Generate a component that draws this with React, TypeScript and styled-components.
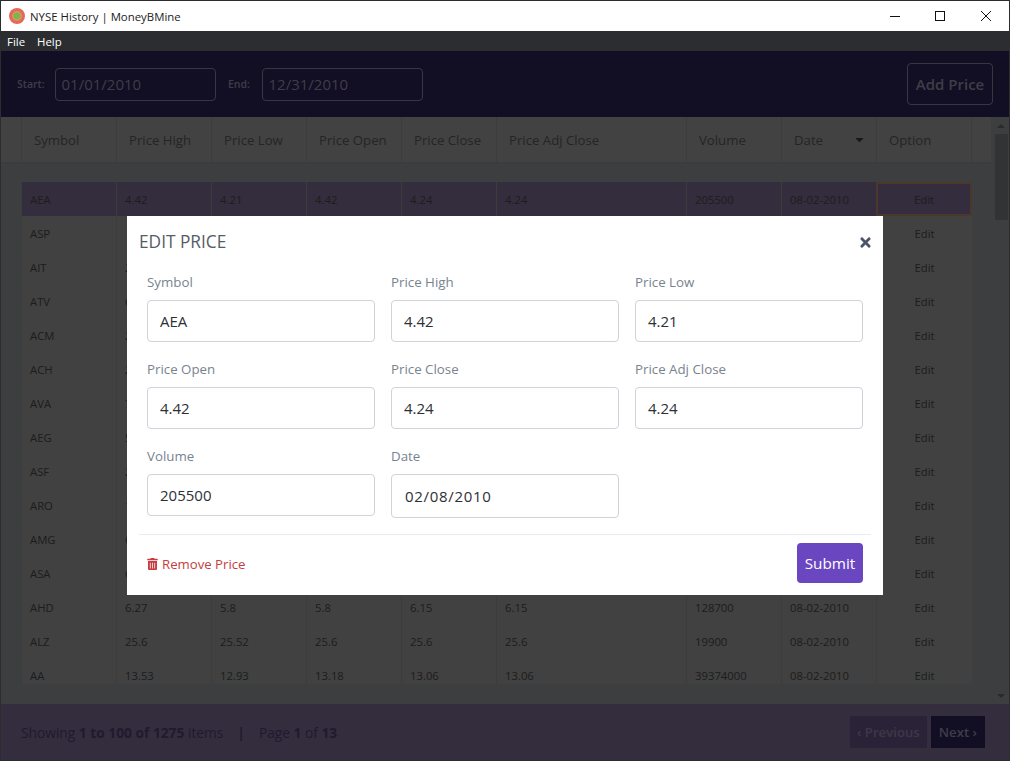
import styled, { createGlobalStyle } from "styled-components";
import { FaTimes, FaTrashAlt, FaCaretDown } from "react-icons/fa";

interface Price {
  symbol: string;
  high: string;
  low?: string;
  open?: string;
  close?: string;
  adj?: string;
  volume?: string;
  date?: string;
}

// rows behind the modal only show their symbol, a sliver of the high price and the edit link
const prices: Price[] = [
  { symbol: "AEA", high: "4.42", low: "4.21", open: "4.42", close: "4.24", adj: "4.24", volume: "205500", date: "08-02-2010" },
  { symbol: "ASP", high: "" },
  { symbol: "AIT", high: "2" },
  { symbol: "ATV", high: "6" },
  { symbol: "ACM", high: "2" },
  { symbol: "ACH", high: "2" },
  { symbol: "AVA", high: "7" },
  { symbol: "AEG", high: "5" },
  { symbol: "ASF", high: "2" },
  { symbol: "ARO", high: "1" },
  { symbol: "AMG", high: "6" },
  { symbol: "ASA", high: "6" },
  { symbol: "AHD", high: "6.27", low: "5.8", open: "5.8", close: "6.15", adj: "6.15", volume: "128700", date: "08-02-2010" },
  { symbol: "ALZ", high: "25.6", low: "25.52", open: "25.6", close: "25.6", adj: "25.6", volume: "19900", date: "08-02-2010" },
  { symbol: "AA", high: "13.53", low: "12.93", open: "13.18", close: "13.06", adj: "13.06", volume: "39374000", date: "08-02-2010" },
];

const columns = "95px 95px 95px 95px 95px 190px 95px 95px 96px";

const GlobalStyle = createGlobalStyle`
  html, body {
    margin: 0;
    padding: 0;
    height: 100%;
    overflow: hidden;
    font-family: "Open Sans", "Liberation Sans", sans-serif;
  }
  * {
    box-sizing: border-box;
  }
`;

const Window = styled.div`
  display: flex;
  flex-direction: column;
  width: 1010px;
  height: 761px;
  border: 1px solid #2b2d30;
  background: #fff;
`;

const TitleBar = styled.div`
  display: flex;
  align-items: center;
  flex: none;
  height: 30px;
  padding-left: 8px;
  background: #fff;
`;

const TitleText = styled.span`
  margin-left: 5px;
  font-size: 11.4px;
  color: #1c1c1c;
`;

const WindowControls = styled.div`
  display: flex;
  margin-left: auto;
  margin-right: 0.5px;
`;

const WindowControl = styled.div`
  display: flex;
  align-items: center;
  justify-content: center;
  width: 45.5px;
  height: 30px;
`;

const MenuBar = styled.div`
  display: flex;
  align-items: center;
  flex: none;
  gap: 12px;
  height: 20px;
  padding-left: 6px;
  background: #2b2d30;
  font-size: 11.4px;
  color: #fff;
`;

const Workspace = styled.div`
  position: relative;
  display: flex;
  flex-direction: column;
  flex: 1;
  min-height: 0;
  background: #7a7d80;
`;

const Toolbar = styled.div`
  display: flex;
  align-items: center;
  flex: none;
  height: 66px;
  padding: 0 16px;
  background: #241c48;
`;

const FilterLabel = styled.label<{ $width: number }>`
  width: ${(p) => p.$width}px;
  font-size: 10.5px;
  font-weight: 600;
  color: #7d7a8e;
`;

const DateFilter = styled.div`
  width: 161px;
  height: 33px;
  margin-right: 12px;
  padding: 0 5.5px;
  border: 1px solid #716e82;
  border-radius: 4px;
  font-size: 15px;
  line-height: 31px;
  color: #7d7a8e;
`;

const AddButton = styled.button`
  margin-left: auto;
  width: 86px;
  height: 42px;
  padding: 0;
  border: 1px solid #716e82;
  border-radius: 4px;
  background: transparent;
  font-family: inherit;
  font-size: 15px;
  font-weight: 600;
  color: #7d7a8e;
`;

const TableArea = styled.div`
  display: flex;
  flex: 1;
  min-height: 0;
`;

const TableScroller = styled.div`
  display: flex;
  flex-direction: column;
  flex: 1;
  min-width: 0;
`;

const HeaderRow = styled.div`
  display: grid;
  grid-template-columns: ${columns};
  flex: none;
  height: 47px;
  padding-left: 20px;
  background: #848484;
  border-bottom: 2px solid #787878;
`;

const HeaderCell = styled.div`
  display: flex;
  align-items: center;
  justify-content: space-between;
  padding: 0 13px 0 12px;
  border-left: 1px solid #787878;
  font-size: 13.2px;
  color: #4a4a4a;

  &:last-child {
    border-right: 1px solid #787878;
  }
`;

const SortCaret = styled(FaCaretDown)`
  width: 13px;
  height: 13px;
  margin-right: -3px;
  color: #333;
`;

const Rows = styled.div`
  flex: 1;
  min-height: 0;
  margin-top: 18px;
  margin-bottom: 20px;
  padding-left: 20px;
  overflow: hidden;
`;

const Row = styled.div<{ $selected?: boolean }>`
  display: grid;
  grid-template-columns: ${columns};
  width: 951px;
  height: 34px;
  background: ${(p) => (p.$selected ? "#675a7c" : "#828282")};
`;

const Cell = styled.div`
  display: flex;
  align-items: center;
  padding-left: 8px;
  border-left: 1px solid #787878;
  font-size: 11.3px;
  color: #3a3a3a;
`;

const EditCell = styled(Cell)<{ $focused?: boolean }>`
  justify-content: center;
  padding-left: 0;
  ${(p) => (p.$focused ? "border: 2px solid #94705a;" : "")}
`;

const Scrollbar = styled.div`
  display: flex;
  flex-direction: column;
  align-items: center;
  flex: none;
  width: 16px;
  margin-left: 2px;
  background: #7a7d80;
`;

const ScrollArrow = styled.svg`
  flex: none;
  width: 16px;
  height: 17px;
`;

const ScrollTrack = styled.div`
  flex: 1;
  width: 100%;
`;

const ScrollThumb = styled.div`
  width: 13px;
  height: 86px;
  background: #62666a;
`;

const Pager = styled.div`
  display: flex;
  align-items: center;
  flex: none;
  height: 56px;
  padding: 0 24px 0 20px;
  background: #675a7c;
  font-size: 13.75px;
  color: #42355c;
`;

const PagerDivider = styled.span`
  margin: 0 14px;
  font-weight: 700;
`;

const PagerButton = styled.button<{ $primary?: boolean }>`
  height: 32px;
  padding: 0 ${(p) => (p.$primary ? "8px" : "7px")};
  margin-left: ${(p) => (p.$primary ? "4px" : "auto")};
  border: none;
  background: ${(p) => (p.$primary ? "#241c48" : "#54476e")};
  font-family: inherit;
  font-size: 13.2px;
  font-weight: 600;
  color: ${(p) => (p.$primary ? "#7d7a8e" : "#7a6f92")};
`;

const Backdrop = styled.div`
  position: absolute;
  inset: 0;
  display: flex;
  align-items: center;
  justify-content: center;
  background: rgba(0, 0, 0, 0.5);
`;

const Modal = styled.div`
  display: flex;
  flex-direction: column;
  width: 756px;
  background: #fff;
`;

const ModalHeader = styled.div`
  display: flex;
  align-items: center;
  justify-content: space-between;
  height: 55px;
  padding: 0 11px 5px 12px;
`;

const ModalTitle = styled.h3`
  margin: 0;
  font-size: 17.3px;
  font-weight: 400;
  color: #555c64;
`;

const CloseIcon = styled(FaTimes)`
  width: 13px;
  height: 15px;
  margin-top: 2px;
  color: #4a5568;
`;

const FieldGrid = styled.div`
  display: grid;
  grid-template-columns: repeat(3, 228px);
  column-gap: 16px;
  row-gap: 16px;
  padding: 0 20px;
`;

const Field = styled.div`
  display: flex;
  flex-direction: column;
`;

const FieldLabel = styled.label`
  height: 22px;
  margin-bottom: 7px;
  font-size: 13.3px;
  line-height: 22px;
  color: #77838f;
`;

const FieldInput = styled.input<{ $tall?: boolean }>`
  width: 100%;
  height: ${(p) => (p.$tall ? "44px" : "42px")};
  padding: 0 12px 0 ${(p) => (p.$tall ? "13px" : "12px")};
  border: 1px solid #ced4da;
  border-radius: 4px;
  background: #fff;
  font-family: inherit;
  font-size: 15px;
  color: #2d3034;
  letter-spacing: ${(p) => (p.$tall ? "0.7px" : "0")};
  outline: none;
`;

const ModalFooter = styled.div`
  display: flex;
  align-items: center;
  justify-content: space-between;
  margin: 16px 12px 0;
  padding: 8px 8px 12px;
  border-top: 1px solid #e8ebf0;
`;

const RemoveLink = styled.a`
  display: flex;
  align-items: center;
  gap: 4px;
  margin-top: 2px;
  font-size: 13.2px;
  color: #c53c42;

  svg {
    width: 11px;
    height: 12px;
  }
`;

const SubmitButton = styled.button`
  width: 66px;
  height: 40px;
  padding: 0;
  border: none;
  border-radius: 4px;
  background: #6b46c1;
  font-family: inherit;
  font-size: 15.3px;
  font-weight: 500;
  color: #fff;
`;

const Logo = () => (
  <svg width="16" height="16" viewBox="0 0 16 16">
    <circle cx="8" cy="8" r="8" fill="#e5685c" />
    <circle cx="8" cy="8" r="5" fill="#c9a04e" />
    <circle cx="8" cy="8" r="3.2" fill="#7fb05a" />
  </svg>
);

const App = () => {
  return (
    <>
      <GlobalStyle />
      <Window>
        <TitleBar>
          <Logo />
          <TitleText>NYSE History | MoneyBMine</TitleText>
          <WindowControls>
            <WindowControl>
              <svg width="10" height="10" viewBox="0 0 10 10">
                <path d="M0 5.5h10" stroke="#111" strokeWidth="1" />
              </svg>
            </WindowControl>
            <WindowControl>
              <svg width="10" height="10" viewBox="0 0 10 10">
                <rect x="0.5" y="0.5" width="9" height="9" fill="none" stroke="#111" />
              </svg>
            </WindowControl>
            <WindowControl>
              <svg width="10" height="10" viewBox="0 0 10 10">
                <path d="M0 0l10 10M10 0L0 10" stroke="#111" strokeWidth="1" />
              </svg>
            </WindowControl>
          </WindowControls>
        </TitleBar>
        <MenuBar>
          <span>File</span>
          <span>Help</span>
        </MenuBar>
        <Workspace>
          <Toolbar>
            <FilterLabel $width={38}>Start:</FilterLabel>
            <DateFilter>01/01/2010</DateFilter>
            <FilterLabel $width={34}>End:</FilterLabel>
            <DateFilter>12/31/2010</DateFilter>
            <AddButton>Add Price</AddButton>
          </Toolbar>
          <TableArea>
            <TableScroller>
              <HeaderRow>
                <HeaderCell>Symbol</HeaderCell>
                <HeaderCell>Price High</HeaderCell>
                <HeaderCell>Price Low</HeaderCell>
                <HeaderCell>Price Open</HeaderCell>
                <HeaderCell>Price Close</HeaderCell>
                <HeaderCell>Price Adj Close</HeaderCell>
                <HeaderCell>Volume</HeaderCell>
                <HeaderCell>
                  Date
                  <SortCaret />
                </HeaderCell>
                <HeaderCell>Option</HeaderCell>
              </HeaderRow>
              <Rows>
                {prices.map((price, i) => (
                  <Row key={price.symbol} $selected={i === 0}>
                    <Cell>{price.symbol}</Cell>
                    <Cell>{price.high}</Cell>
                    <Cell>{price.low}</Cell>
                    <Cell>{price.open}</Cell>
                    <Cell>{price.close}</Cell>
                    <Cell>{price.adj}</Cell>
                    <Cell>{price.volume}</Cell>
                    <Cell>{price.date}</Cell>
                    <EditCell $focused={i === 0}>Edit</EditCell>
                  </Row>
                ))}
              </Rows>
            </TableScroller>
            <Scrollbar>
              <ScrollArrow viewBox="0 0 16 17">
                <path d="M4 11l4-4 4 4z" fill="#555" />
              </ScrollArrow>
              <ScrollThumb />
              <ScrollTrack />
              <ScrollArrow viewBox="0 0 16 17">
                <path d="M4 7l4 4 4-4z" fill="#555" />
              </ScrollArrow>
            </Scrollbar>
          </TableArea>
          <Pager>
            <span>
              Showing <b>1 to 100 of 1275</b> items
            </span>
            <PagerDivider>|</PagerDivider>
            <span>
              Page <b>1</b> of <b>13</b>
            </span>
            <PagerButton>‹ Previous</PagerButton>
            <PagerButton $primary>Next ›</PagerButton>
          </Pager>
          <Backdrop>
            <Modal>
              <ModalHeader>
                <ModalTitle>EDIT PRICE</ModalTitle>
                <CloseIcon />
              </ModalHeader>
              <FieldGrid>
                <Field>
                  <FieldLabel>Symbol</FieldLabel>
                  <FieldInput readOnly value="AEA" />
                </Field>
                <Field>
                  <FieldLabel>Price High</FieldLabel>
                  <FieldInput readOnly value="4.42" />
                </Field>
                <Field>
                  <FieldLabel>Price Low</FieldLabel>
                  <FieldInput readOnly value="4.21" />
                </Field>
                <Field>
                  <FieldLabel>Price Open</FieldLabel>
                  <FieldInput readOnly value="4.42" />
                </Field>
                <Field>
                  <FieldLabel>Price Close</FieldLabel>
                  <FieldInput readOnly value="4.24" />
                </Field>
                <Field>
                  <FieldLabel>Price Adj Close</FieldLabel>
                  <FieldInput readOnly value="4.24" />
                </Field>
                <Field>
                  <FieldLabel>Volume</FieldLabel>
                  <FieldInput readOnly value="205500" />
                </Field>
                <Field>
                  <FieldLabel>Date</FieldLabel>
                  <FieldInput readOnly $tall value="02/08/2010" />
                </Field>
              </FieldGrid>
              <ModalFooter>
                <RemoveLink>
                  <FaTrashAlt />
                  Remove Price
                </RemoveLink>
                <SubmitButton>Submit</SubmitButton>
              </ModalFooter>
            </Modal>
          </Backdrop>
        </Workspace>
      </Window>
    </>
  );
};

export default App;
